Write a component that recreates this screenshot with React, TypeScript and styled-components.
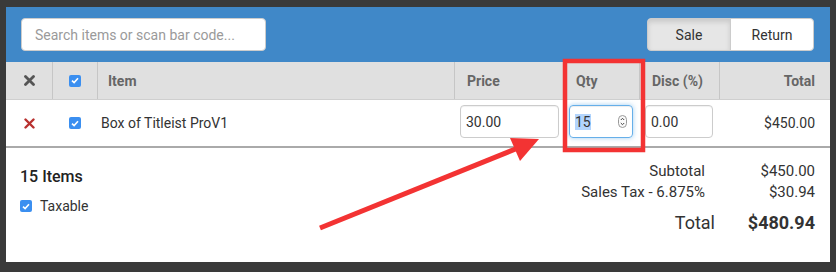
import React from "react";
import styled, { createGlobalStyle } from "styled-components";

const GlobalStyle = createGlobalStyle`
  html, body {
    margin: 0;
    padding: 0;
    background-color: #3a3a3a;
    background-image: radial-gradient(rgba(0, 0, 0, 0.55) 0.8px, transparent 1.2px);
    background-size: 23px 19px;
    font-family: Roboto, "Liberation Sans", Arial, sans-serif;
    color: #333;
  }
`;

const Page = styled.div`
  padding: 7px 6px;
  width: 836px;
  height: 272px;
  box-sizing: border-box;
  position: relative;
`;

const Panel = styled.section`
  width: 824px;
  height: 255px;
  background: #fff;
  display: flex;
  flex-direction: column;
`;

const TopBar = styled.div`
  height: 55px;
  background: #4088c8;
  box-sizing: border-box;
  padding: 11px 16px 0 15px;
  display: flex;
  justify-content: space-between;
  align-items: flex-start;
`;

const Search = styled.div`
  width: 245px;
  height: 33px;
  box-sizing: border-box;
  background: #fff;
  border: 1px solid #ccc;
  border-radius: 4px;
  padding: 0 13px;
  display: flex;
  align-items: center;
  font-size: 14px;
  color: #9a9a9a;
`;

const Toggle = styled.div`
  display: flex;
  height: 33px;
`;

const ToggleButton = styled.div<{ $active?: boolean; $first?: boolean }>`
  width: 84px;
  box-sizing: border-box;
  display: flex;
  align-items: center;
  justify-content: center;
  font-size: 14px;
  color: #333;
  border: 1px solid #ccc;
  background: ${(p) => (p.$active ? "#e6e6e6" : "#fff")};
  box-shadow: ${(p) => (p.$active ? "inset 0 3px 5px rgba(0,0,0,0.125)" : "none")};
  border-radius: ${(p) => (p.$first ? "4px 0 0 4px" : "0 4px 4px 0")};
  margin-left: ${(p) => (p.$first ? "0" : "-1px")};
`;

const Grid = styled.div`
  display: grid;
  grid-template-columns: 46px 45px 1fr 109px 76px 80px 111px;
`;

const HeadRow = styled(Grid)`
  height: 38px;
  background: #e0e0e0;
  border-bottom: 1px solid #cfcfcf;
  box-sizing: border-box;
`;

const HeadCell = styled.div<{ $center?: boolean; $right?: boolean; $first?: boolean }>`
  display: flex;
  align-items: center;
  justify-content: ${(p) => (p.$center ? "center" : p.$right ? "flex-end" : "flex-start")};
  padding: ${(p) => (p.$center ? "0" : p.$right ? "0 15px 0 0" : "0 0 0 12px")};
  border-left: ${(p) => (p.$first ? "none" : "1px solid #c6c6c6")};
  font-size: 14px;
  font-weight: 700;
  color: #666;
`;

const BodyRow = styled(Grid)`
  height: 48px;
  border-bottom: 2px solid #aaa;
  box-sizing: border-box;
`;

const Cell = styled.div<{ $center?: boolean; $right?: boolean; $pad?: string }>`
  display: flex;
  align-items: center;
  justify-content: ${(p) => (p.$center ? "center" : p.$right ? "flex-end" : "flex-start")};
  padding: ${(p) => p.$pad ?? "0"};
  font-size: 14px;
  color: #333;
`;

const Field = styled.div<{ $w: number; $focus?: boolean }>`
  width: ${(p) => p.$w}px;
  height: 33px;
  box-sizing: border-box;
  margin-top: -3px;
  border: 1px solid ${(p) => (p.$focus ? "#66afe9" : "#ccc")};
  box-shadow: ${(p) =>
    p.$focus ? "inset 0 1px 1px rgba(0,0,0,.075), 0 0 5px rgba(102,175,233,.6)" : "inset 0 1px 1px rgba(0,0,0,.06)"};
  border-radius: 4px;
  padding: 0 5px;
  display: flex;
  align-items: center;
  justify-content: space-between;
  font-size: 14px;
  color: #333;
`;

const Selected = styled.span`
  background: #b3d4fc;
`;

const Check = styled.span`
  width: 12px;
  height: 12px;
  border-radius: 2px;
  background: #3b8ff0;
  display: inline-flex;
  align-items: center;
  justify-content: center;
  flex-shrink: 0;
`;

const Footer = styled.div`
  flex: 1;
  display: flex;
  justify-content: space-between;
  align-items: flex-start;
  padding: 13px 15px 0 14px;
`;

const Left = styled.div`
  padding-top: 6px;
  display: flex;
  flex-direction: column;
`;

const Count = styled.div`
  font-size: 16px;
  font-weight: 500;
  line-height: 20px;
  color: #222;
`;

const CheckLine = styled.label`
  margin-top: 11px;
  display: flex;
  align-items: center;
  gap: 8px;
  font-size: 14px;
  color: #333;
`;

const Summary = styled.div`
  display: grid;
  grid-template-columns: auto 100px;
  align-content: start;
`;

const Label = styled.div<{ $big?: boolean }>`
  text-align: right;
  font-size: ${(p) => (p.$big ? "18px" : "15px")};
  line-height: ${(p) => (p.$big ? "28px" : "21px")};
  margin-top: ${(p) => (p.$big ? "6px" : "0")};
  padding-right: ${(p) => (p.$big ? "0" : "10px")};
  color: #333;
`;

const Value = styled(Label)<{ $bold?: boolean }>`
  padding-right: 0;
  font-weight: ${(p) => (p.$bold ? 700 : 400)};
`;

const Overlay = styled.svg`
  position: absolute;
  left: 0;
  top: 0;
  pointer-events: none;
`;

const CheckMark = () => (
  <svg width="8" height="7" viewBox="0 0 8 7">
    <path d="M1 3.6 L3.1 5.6 L7 1.2" fill="none" stroke="#fff" strokeWidth="1.6" />
  </svg>
);

const Cross = ({ color, w }: { color: string; w: number }) => (
  <svg width="11" height="11" viewBox="0 0 11 11">
    <path d="M1.5 1.5 L9.5 9.5 M9.5 1.5 L1.5 9.5" stroke={color} strokeWidth={w} strokeLinecap="round" />
  </svg>
);

const Spinner = () => (
  <svg width="9" height="13" viewBox="0 0 9 13">
    <rect x="0.5" y="0.5" width="8" height="12" rx="4" fill="#fafafa" stroke="#999" />
    <path d="M2.8 5 L4.5 3.3 L6.2 5 M2.8 8 L4.5 9.7 L6.2 8" fill="none" stroke="#444" strokeWidth="1" />
  </svg>
);

const App: React.FC = () => {
  return (
    <Page>
      <GlobalStyle />
      <Panel>
        <TopBar>
          <Search>Search items or scan bar code...</Search>
          <Toggle>
            <ToggleButton $active $first>Sale</ToggleButton>
            <ToggleButton>Return</ToggleButton>
          </Toggle>
        </TopBar>

        <HeadRow>
          <HeadCell $center $first>
            <Cross color="#555" w={2.8} />
          </HeadCell>
          <HeadCell $center>
            <Check><CheckMark /></Check>
          </HeadCell>
          <HeadCell style={{ paddingLeft: 10 }}>Item</HeadCell>
          <HeadCell>Price</HeadCell>
          <HeadCell>Qty</HeadCell>
          <HeadCell>Disc (%)</HeadCell>
          <HeadCell $right>Total</HeadCell>
        </HeadRow>

        <BodyRow>
          <Cell $center>
            <Cross color="#b8312f" w={2.4} />
          </Cell>
          <Cell $center>
            <Check><CheckMark /></Check>
          </Cell>
          <Cell $pad="0 0 0 4px">Box of Titleist ProV1</Cell>
          <Cell $pad="0 0 0 6px">
            <Field $w={99}>30.00</Field>
          </Cell>
          <Cell $pad="0 0 0 6px">
            <Field $w={64} $focus>
              <Selected>15</Selected>
              <Spinner />
            </Field>
          </Cell>
          <Cell $pad="0 0 0 6px">
            <Field $w={68}>0.00</Field>
          </Cell>
          <Cell $right $pad="0 15px 0 0">$450.00</Cell>
        </BodyRow>

        <Footer>
          <Left>
            <Count>15 Items</Count>
            <CheckLine>
              <Check><CheckMark /></Check>
              Taxable
            </CheckLine>
          </Left>
          <Summary>
            <Label>Subtotal</Label>
            <Value>$450.00</Value>
            <Label>Sales Tax - 6.875%</Label>
            <Value>$30.94</Value>
            <Label $big>Total</Label>
            <Value $big $bold>$480.94</Value>
          </Summary>
        </Footer>
      </Panel>

      <Overlay width="836" height="272" viewBox="0 0 836 272">
        <rect x="565" y="61" width="78" height="89" fill="none" stroke="#f33333" strokeWidth="4.5" />
        <line x1="320" y1="228" x2="518" y2="148" stroke="#f33333" strokeWidth="5" />
        <polygon points="539,139 510,138 520,161" fill="#f33333" />
      </Overlay>
    </Page>
  );
};

export default App;
